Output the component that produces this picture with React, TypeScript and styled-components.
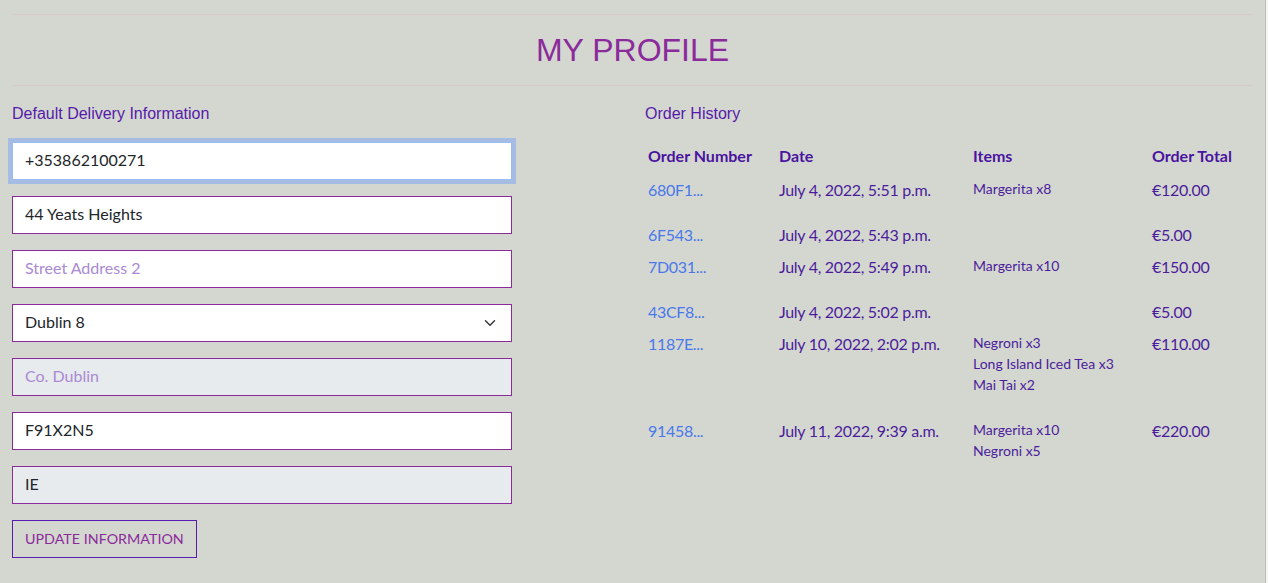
import React from 'react';
import styled, { createGlobalStyle } from 'styled-components';

const GlobalStyle = createGlobalStyle`
  html, body {
    margin: 0;
    padding: 0;
    background: #f4f4f4;
  }
  * { box-sizing: border-box; }
`;

const Page = styled.div`
  width: calc(100% - 2px);
  min-height: 583px;
  background: #d4d7d0;
  border-right: 1px solid #b9bcb5;
  padding: 14px 12px 0 12px;
  font-family: 'Lato', 'Noto Sans', sans-serif;
`;

const Rule = styled.hr`
  margin: 0;
  border: 0;
  border-top: 1px solid #d9caca;
`;

const Title = styled.h1`
  margin: 0;
  height: 70px;
  display: flex;
  align-items: center;
  justify-content: center;
  font-family: 'Liberation Sans', Arial, sans-serif;
  font-weight: 400;
  font-size: 32px;
  color: #8b2b9b;
`;

const Columns = styled.div`
  display: grid;
  grid-template-columns: 633px 1fr;
  padding-top: 18px;
`;

const Heading = styled.h4`
  margin: 0 0 19px 0;
  font-family: 'Liberation Sans', Arial, sans-serif;
  font-weight: 400;
  font-size: 16px;
  line-height: 19px;
  color: #561aaa;
`;

const Form = styled.form`
  display: flex;
  flex-direction: column;
  gap: 16px;
  width: 500px;
`;

const Field = styled.input<{ $focused?: boolean }>`
  width: 100%;
  height: 38px;
  margin: 0;
  padding: 0 12px 3px 12px;
  border: 1px solid ${p => (p.$focused ? '#9dbbf2' : '#8b2b9b')};
  box-shadow: ${p => (p.$focused ? '0 0 0 4px #a6bde3' : 'none')};
  border-radius: 0;
  background: ${p => (p.disabled ? '#e8ebee' : '#ffffff')};
  font-family: 'Lato', 'Noto Sans', sans-serif;
  font-size: 16px;
  color: #212529;
  outline: none;
  &::placeholder {
    color: #a98ad3;
    opacity: 1;
  }
`;

const SelectWrap = styled.div`
  position: relative;
  width: 100%;
`;

const Select = styled.select`
  width: 100%;
  height: 38px;
  margin: 0;
  padding: 0 12px 3px 12px;
  border: 1px solid #8b2b9b;
  border-radius: 0;
  background: #ffffff;
  appearance: none;
  font-family: 'Lato', 'Noto Sans', sans-serif;
  font-size: 16px;
  color: #212529;
  outline: none;
`;

const Chevron = styled.svg`
  position: absolute;
  right: 15px;
  top: 13px;
  pointer-events: none;
`;

const Button = styled.button`
  align-self: flex-start;
  height: 38px;
  padding: 0 12px 1px 12px;
  border: 1px solid #5a1ab0;
  border-radius: 0;
  background: transparent;
  font-family: 'Lato', 'Noto Sans', sans-serif;
  font-size: 14.3px;
  color: #8b2b9b;
  text-transform: uppercase;
`;

const Table = styled.table`
  width: 100%;
  border-collapse: collapse;
  font-family: 'Lato', 'Noto Sans', sans-serif;
`;

const Th = styled.th<{ $w?: number }>`
  text-align: left;
  vertical-align: top;
  padding: 2px 3px 6px 3px;
  height: 32px;
  font-size: 16px;
  line-height: 24px;
  font-weight: 700;
  color: #4a14a0;
  width: ${p => (p.$w ? `${p.$w}px` : 'auto')};
`;

const Td = styled.td`
  vertical-align: top;
  padding: 4px 3px;
  font-size: 16px;
  line-height: 24px;
  letter-spacing: -0.3px;
  color: #4b1c9c;
`;

const OrderLink = styled.a`
  color: #4a78ec;
  text-decoration: none;
`;

const ItemList = styled.ul`
  list-style: none;
  margin: 0 0 16px 0;
  padding: 0;
  font-size: 14px;
  line-height: 21px;
  letter-spacing: 0;
  color: #4b1c9c;
`;

const orders = [
  { id: '680F1...', date: 'July 4, 2022, 5:51 p.m.', items: ['Margerita x8'], total: '€120.00' },
  { id: '6F543...', date: 'July 4, 2022, 5:43 p.m.', items: [], total: '€5.00' },
  { id: '7D031...', date: 'July 4, 2022, 5:49 p.m.', items: ['Margerita x10'], total: '€150.00' },
  { id: '43CF8...', date: 'July 4, 2022, 5:02 p.m.', items: [], total: '€5.00' },
  {
    id: '1187E...',
    date: 'July 10, 2022, 2:02 p.m.',
    items: ['Negroni x3', 'Long Island Iced Tea x3', 'Mai Tai x2'],
    total: '€110.00',
  },
  { id: '91458...', date: 'July 11, 2022, 9:39 a.m.', items: ['Margerita x10', 'Negroni x5'], total: '€220.00' },
];

export default function App() {
  return (
    <>
      <GlobalStyle />
      <Page>
        <Rule />
        <Title>MY PROFILE</Title>
        <Rule />
        <Columns>
          <div>
            <Heading>Default Delivery Information</Heading>
            <Form onSubmit={e => e.preventDefault()}>
              <Field $focused defaultValue="+353862100271" />
              <Field defaultValue="44 Yeats Heights" />
              <Field placeholder="Street Address 2" />
              <SelectWrap>
                <Select defaultValue="d8">
                  <option value="d8">Dublin 8</option>
                </Select>
                <Chevron width="14" height="12" viewBox="0 0 16 16">
                  <path
                    d="M2 5l6 6 6-6"
                    fill="none"
                    stroke="#343a40"
                    strokeWidth="2"
                    strokeLinecap="round"
                    strokeLinejoin="round"
                  />
                </Chevron>
              </SelectWrap>
              <Field disabled placeholder="Co. Dublin" />
              <Field defaultValue="F91X2N5" />
              <Field disabled defaultValue="IE" />
              <Button type="submit">Update Information</Button>
            </Form>
          </div>
          <div>
            <Heading>Order History</Heading>
            <Table>
              <thead>
                <tr>
                  <Th $w={131}>Order Number</Th>
                  <Th $w={194}>Date</Th>
                  <Th $w={179}>Items</Th>
                  <Th>Order Total</Th>
                </tr>
              </thead>
              <tbody>
                {orders.map(o => (
                  <tr key={o.id}>
                    <Td>
                      <OrderLink href="#">{o.id}</OrderLink>
                    </Td>
                    <Td>{o.date}</Td>
                    <Td>
                      {o.items.length > 0 && (
                        <ItemList>
                          {o.items.map(i => (
                            <li key={i}>{i}</li>
                          ))}
                        </ItemList>
                      )}
                    </Td>
                    <Td>{o.total}</Td>
                  </tr>
                ))}
              </tbody>
            </Table>
          </div>
        </Columns>
      </Page>
    </>
  );
}
